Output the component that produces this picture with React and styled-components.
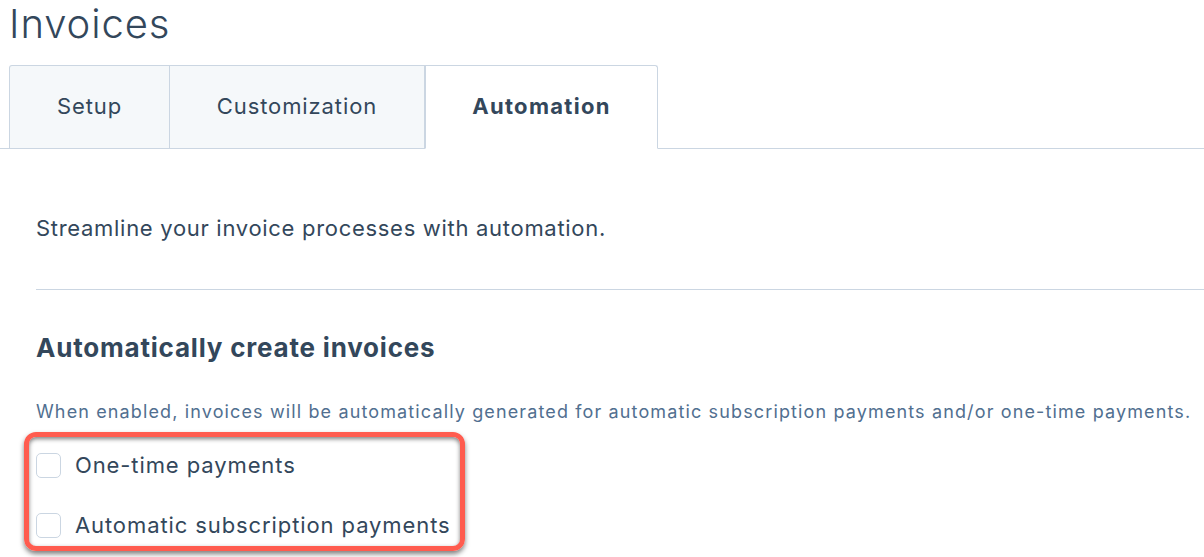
import React from "react";
import styled, { createGlobalStyle } from "styled-components";

const GlobalStyle = createGlobalStyle`
  html, body { margin: 0; padding: 0; background: #fff; }
  body { font-family: Inter, "Noto Sans", sans-serif; color: #33475b; overflow: hidden; }
`;

const Page = styled.div`
  width: 1204px;
  height: 557px;
  overflow: hidden;
`;

const Title = styled.h1`
  margin: 0;
  padding: 2px 0 0 9px;
  height: 63px;
  font-size: 40px;
  font-weight: 300;
  line-height: 44px;
  letter-spacing: 0.9px;
  color: #33475b;
`;

const TabBar = styled.div`
  display: flex;
  padding-left: 9px;
  border-bottom: 1px solid #cbd6e2;
  height: 83px;
`;

const Tab = styled.div`
  width: ${(p) => p.$w}px;
  display: flex;
  align-items: center;
  justify-content: center;
  box-sizing: border-box;
  border: 1px solid #cbd6e2;
  border-left-width: ${(p) => (p.$first || p.$active ? 1 : 0)}px;
  border-bottom: ${(p) => (p.$active ? "1px solid #fff" : "none")};
  margin-bottom: ${(p) => (p.$active ? -1 : 0)}px;
  background: ${(p) => (p.$active ? "#fff" : "#f5f8fa")};
  border-radius: ${(p) => (p.$first ? "3px 0 0 0" : p.$active ? "0 3px 0 0" : "0")};
  padding-bottom: 2px;
  font-size: 22px;
  font-weight: ${(p) => (p.$active ? 700 : 400)};
  letter-spacing: ${(p) => (p.$active ? 1.3 : 0.9)}px;
  color: #33475b;
`;

const Content = styled.div`
  padding: 0 0 0 36px;
`;

const Intro = styled.p`
  margin: 0;
  padding-top: 64px;
  height: 76px;
  font-size: 22px;
  line-height: 30px;
  letter-spacing: 0.7px;
`;

const Divider = styled.hr`
  margin: 0;
  border: 0;
  border-top: 1px solid #cbd6e2;
`;

const Heading = styled.h2`
  margin: 0;
  padding-top: 41px;
  font-size: 26px;
  font-weight: 700;
  line-height: 34px;
  letter-spacing: 0.8px;
`;

const Help = styled.p`
  margin: 0;
  padding-top: 34px;
  font-size: 18px;
  line-height: 26px;
  letter-spacing: 1.13px;
  color: #516f90;
`;

const Highlight = styled.div`
  margin: 7px 0 0 -12px;
  width: 441px;
  box-sizing: border-box;
  border: 5px solid #ff5c4f;
  border-radius: 12px;
  padding: 14px 0 7px 7px;
  display: flex;
  flex-direction: column;
  gap: 32px;
  box-shadow: 0 3px 5px rgba(0, 0, 0, 0.5), inset 0 2px 4px rgba(0, 0, 0, 0.5);
`;

const Option = styled.label`
  display: flex;
  align-items: center;
  gap: 14px;
  height: 28px;
  font-size: 22px;
  line-height: 28px;
  letter-spacing: 0.9px;
  color: #33475b;
`;

const Box = styled.span`
  width: 25px;
  height: 25px;
  flex: none;
  box-sizing: border-box;
  border: 1px solid #cbd6e2;
  border-radius: 5px;
  background: #fff;
`;

export default function App() {
  return (
    <Page>
      <GlobalStyle />
      <Title>Invoices</Title>
      <TabBar>
        <Tab $w={161} $first>Setup</Tab>
        <Tab $w={255}>Customization</Tab>
        <Tab $w={233} $active>Automation</Tab>
      </TabBar>
      <Content>
        <Intro>Streamline your invoice processes with automation.</Intro>
        <Divider />
        <Heading>Automatically create invoices</Heading>
        <Help>
          When enabled, invoices will be automatically generated for automatic subscription payments and/or one-time payments.
        </Help>
        <Highlight>
          <Option>
            <Box />
            One-time payments
          </Option>
          <Option>
            <Box />
            Automatic subscription payments
          </Option>
        </Highlight>
      </Content>
    </Page>
  );
}
